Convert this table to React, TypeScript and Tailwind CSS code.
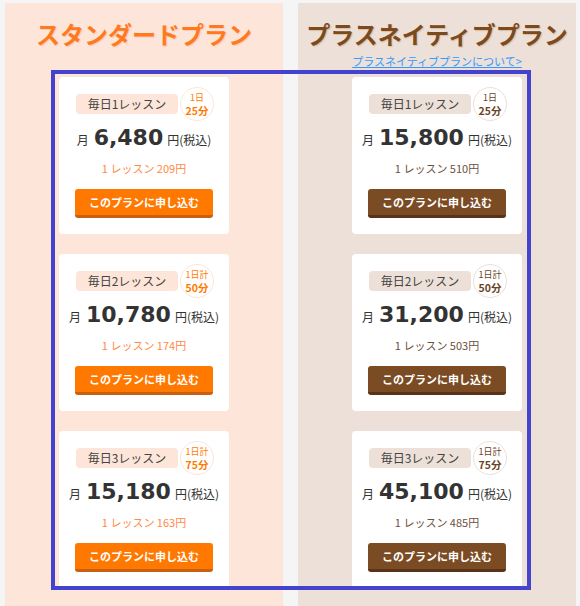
import React from "react";

type Plan = { count: string; badgeTop: string; badgeBottom: string; price: string; per: string };

const standard: Plan[] = [
  { count: "毎日1レッスン", badgeTop: "1日", badgeBottom: "25分", price: "6,480", per: "1 レッスン 209円" },
  { count: "毎日2レッスン", badgeTop: "1日計", badgeBottom: "50分", price: "10,780", per: "1 レッスン 174円" },
  { count: "毎日3レッスン", badgeTop: "1日計", badgeBottom: "75分", price: "15,180", per: "1 レッスン 163円" },
];
const native: Plan[] = [
  { count: "毎日1レッスン", badgeTop: "1日", badgeBottom: "25分", price: "15,800", per: "1 レッスン 510円" },
  { count: "毎日2レッスン", badgeTop: "1日計", badgeBottom: "50分", price: "31,200", per: "1 レッスン 503円" },
  { count: "毎日3レッスン", badgeTop: "1日計", badgeBottom: "75分", price: "45,100", per: "1 レッスン 485円" },
];

function Card({ p, brown }: { p: Plan; brown: boolean }) {
  return (
    <div className="w-[170px] h-[157px] bg-white rounded-[4px] flex flex-col items-center pt-[10px]">
      <div className="flex items-center h-[34px] pl-[2px]">
        <div
          className={
            "w-[102px] h-[20px] rounded-[4px] flex items-center justify-center text-[12px] text-[#444] " +
            (brown ? "bg-[#ece0d8]" : "bg-[#fde5d9]")
          }
        >
          {p.count}
        </div>
        <div
          className={
            "ml-[2px] w-[34px] h-[34px] rounded-full bg-white border flex flex-col items-center justify-center font-bold " +
            (brown ? "border-[#ece0d8] text-[#6b4426]" : "border-[#fde5d9] text-[#ff7a00]")
          }
        >
          <div className="text-[9px] leading-[12px] font-normal">{p.badgeTop}</div>
          <div className="text-[10.5px] leading-[13px]">{p.badgeBottom}</div>
        </div>
      </div>
      <div className="mt-[3px] h-[28px] flex items-baseline justify-center text-[#333] leading-[28px]">
        <span className="text-[12px]">月</span>
        <span className="ml-[5px] text-[22px] font-bold font-['DejaVu_Sans',sans-serif]">{p.price}</span>
        <span className="ml-[4px] text-[12px]">円(税込)</span>
      </div>
      <div className={"mt-[8px] h-[16px] leading-[16px] text-[11px] " + (brown ? "text-[#6e4f3e]" : "text-[#ff8a45]")}>
        {p.per}
      </div>
      <div
        className={
          "mt-[13px] w-[138px] h-[29px] rounded-[3px] border-b-[3px] flex items-center justify-center text-white font-bold text-[11px] " +
          (brown ? "bg-[#7b4b24] border-[#58331a]" : "bg-[#ff7800] border-[#c9600f]")
        }
      >
        このプランに申し込む
      </div>
    </div>
  );
}

export default function App() {
  return (
    <div className="relative w-[580px] h-[606px] overflow-hidden bg-[#f5f5f5] font-['Noto_Sans_CJK_JP','Noto_Sans',sans-serif]">
      <div className="flex gap-[15px] pl-[5px] pt-[3px] h-full">
        <div className="w-[278px] h-full bg-[#fde5d9] flex flex-col items-center pt-[14px]">
          <div className="h-[34px] leading-[34px] text-[24px] font-bold text-[#ff7a1e] [text-shadow:1px_1px_1px_rgba(180,70,0,0.15)]">
            スタンダードプラン
          </div>
          <div className="mt-[2px] h-[16px]" />
          <div className="mt-[8px] flex flex-col gap-5">
            {standard.map((p, i) => (
              <Card key={i} p={p} brown={false} />
            ))}
          </div>
        </div>
        <div className="w-[278px] h-full bg-[#ece0d9] flex flex-col items-center pt-[14px]">
          <div className="h-[34px] leading-[34px] text-[24px] font-bold text-[#7b4a1e] [text-shadow:1px_1px_1px_rgba(190,140,80,0.4)]">
            プラスネイティブプラン
          </div>
          <a className="mt-[2px] h-[16px] leading-[16px] text-[11px] text-[#3399ff] underline">
            プラスネイティブプランについて&gt;
          </a>
          <div className="mt-[8px] flex flex-col gap-5">
            {native.map((p, i) => (
              <Card key={i} p={p} brown={true} />
            ))}
          </div>
        </div>
      </div>
      <div className="absolute left-[51px] top-[70px] w-[480px] h-[520px] border-[4px] border-[#4343cd] pointer-events-none" />
    </div>
  );
}
